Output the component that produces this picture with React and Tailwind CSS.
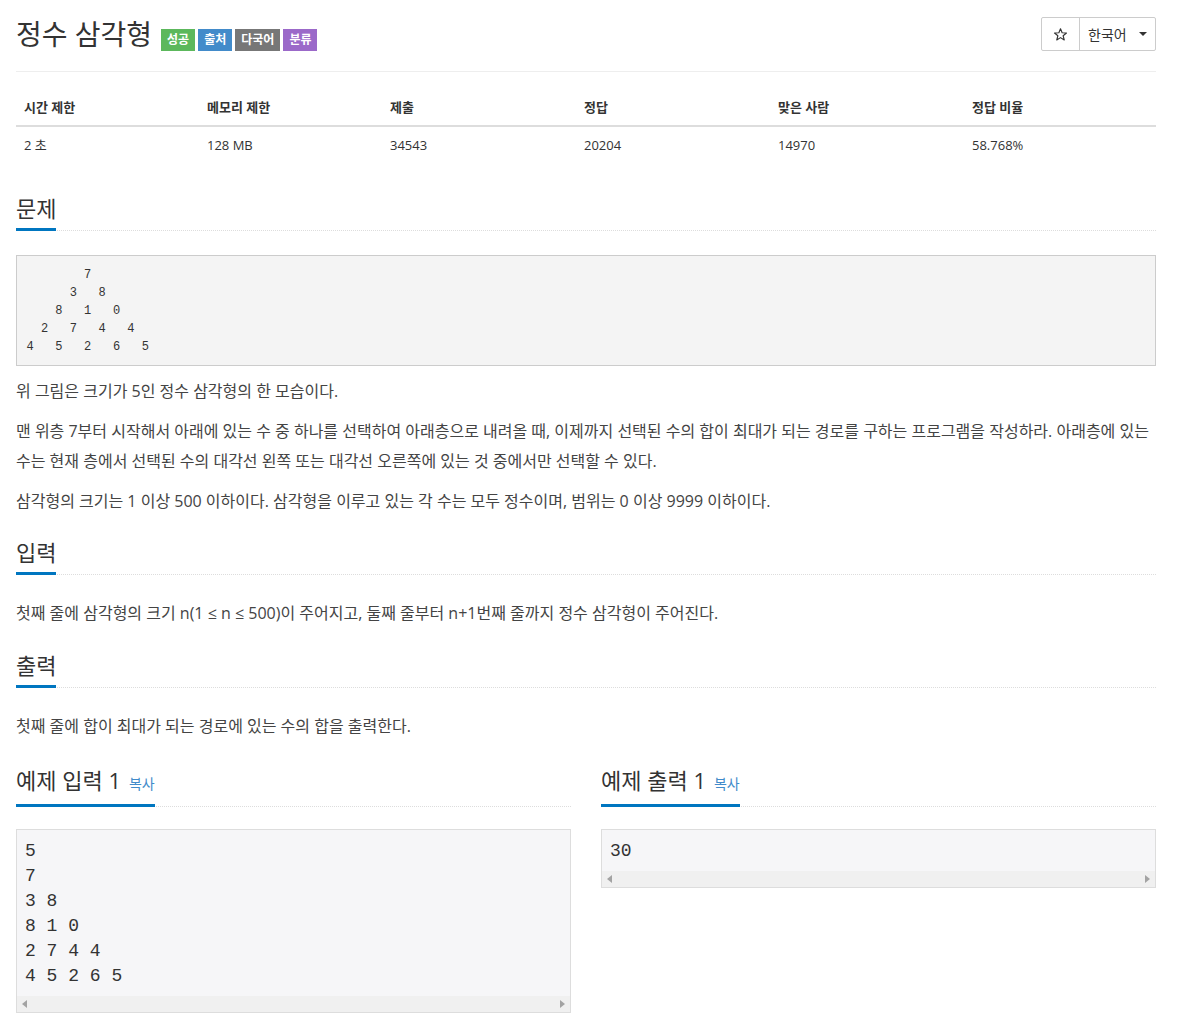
import { useState } from 'react'

// ── Badges ─────────────────────────────────────────────
const BADGES = [
  { label: '성공', cls: 'bg-[#5cb85c]' },
  { label: '출처', cls: 'bg-[#428bca]' },
  { label: '다국어', cls: 'bg-[#777777]' },
  { label: '분류', cls: 'bg-[#9b69c9]' },
]

const STATS = [
  ['시간 제한', '2 초'],
  ['메모리 제한', '128 MB'],
  ['제출', '34543'],
  ['정답', '20204'],
  ['맞은 사람', '14970'],
  ['정답 비율', '58.768%'],
]

const TRIANGLE = [
  '        7',
  '      3   8',
  '    8   1   0',
  '  2   7   4   4',
  '4   5   2   6   5',
].join('\n')

function StarIcon() {
  return (
    <svg width="15" height="15" viewBox="0 0 24 24" className="block">
      <path
        d="M12 2.8 L14.6 9.3 L21.6 9.6 L16.2 14 L18 20.8 L12 17 L6 20.8 L7.8 14 L2.4 9.6 L9.4 9.3 Z"
        fill="none"
        stroke="#333"
        strokeWidth="1.8"
        strokeLinejoin="round"
      />
    </svg>
  )
}

function Headline({ children, className = '' }) {
  return (
    <div className={`flex border-b border-dotted border-[#dddddd] ${className}`}>
      <h2 className="text-[22px] leading-[32px] pb-1 -mb-px border-b-[3px] border-[#0076c0] text-[#333]">
        {children}
      </h2>
    </div>
  )
}

function ScrollBar() {
  return (
    <div className="h-[16px] bg-[#f0f0f0] flex items-center justify-between px-[5px]">
      <svg width="5" height="8" viewBox="0 0 5 8"><path d="M5 0 L0 4 L5 8 Z" fill="#a3a3a3" /></svg>
      <svg width="5" height="8" viewBox="0 0 5 8"><path d="M0 0 L5 4 L0 8 Z" fill="#a3a3a3" /></svg>
    </div>
  )
}

function Sample({ title, data }) {
  return (
    <div className="flex-1 min-w-0">
      <div className="mt-[13px] flex border-b border-dotted border-[#dddddd]">
        <h2 className="flex items-baseline gap-[8px] leading-[32px] pb-1 -mb-px border-b-[3px] border-[#0076c0]">
          <span className="text-[22px] text-[#333]">{title}</span>
          <a href="#" className="text-[14px] text-[#428bca]">복사</a>
        </h2>
      </div>
      <div className="mt-[22px] border border-[#dddddd] bg-[#f6f6f8]">
        <pre className="px-[8px] pt-[9px] pb-[7px] text-[18px] leading-[25px] text-[#333] font-['Liberation_Mono',monospace]">
          {data}
        </pre>
        <ScrollBar />
      </div>
    </div>
  )
}

export default function App() {
  const [lang] = useState('한국어')

  return (
    <div className="min-h-screen bg-white font-['Open_Sans','Noto_Sans_CJK_KR',sans-serif] text-[#333]">
      <div className="ml-4 w-[1140px] pb-4 flex flex-col">
        {/* Header */}
        <div className="flex items-start justify-between pt-[17px] pb-[20px] border-b border-[#eeeeee]">
          <div className="flex items-start gap-[9px]">
            <h1 className="text-[28px] leading-[34px] text-[#333]">정수 삼각형</h1>
            <div className="flex gap-[3px] mt-[12px]">
              {BADGES.map(b => (
                <span
                  key={b.label}
                  className={`${b.cls} h-[22px] px-[6px] flex items-center text-[12px] font-bold text-white`}
                >
                  {b.label}
                </span>
              ))}
            </div>
          </div>
          <div className="flex h-[34px] border border-[#cccccc] rounded-[2px]">
            <button type="button" className="w-[38px] flex items-center justify-center border-r border-[#cccccc]">
              <StarIcon />
            </button>
            <button type="button" className="w-[75px] flex items-center pl-[8px] gap-[12px] text-[14px]">
              {lang}
              <span className="w-0 h-0 border-l-[4px] border-r-[4px] border-t-[4px] border-l-transparent border-r-transparent border-t-[#333]" />
            </button>
          </div>
        </div>

        {/* Stats table */}
        <div className="mt-[17px] mb-[20px]">
          <div className="grid grid-cols-[183px_183px_194px_194px_194px_192px] border-b-2 border-[#dddddd]">
            {STATS.map(([h]) => (
              <div key={h} className="px-2 py-2 leading-[20px] text-[13px] font-bold">{h}</div>
            ))}
          </div>
          <div className="grid grid-cols-[183px_183px_194px_194px_194px_192px]">
            {STATS.map(([h, v]) => (
              <div key={h} className="px-2 py-2 leading-[20px] text-[13px]">{v}</div>
            ))}
          </div>
        </div>

        {/* 문제 */}
        <Headline className="mt-[9px]">문제</Headline>
        <pre className="mt-6 mb-[10px] border border-[#cccccc] bg-[#f4f4f4] p-[9.5px] text-[12px] leading-[18px] text-[#333] font-['Liberation_Mono',monospace]">
          {TRIANGLE}
        </pre>
        <div className="text-[16px] leading-[30px] text-[#444]">
          <p className="mb-[10px]">위 그림은 크기가 5인 정수 삼각형의 한 모습이다.</p>
          <p className="mb-[10px]">
            맨 위층 7부터 시작해서 아래에 있는 수 중 하나를 선택하여 아래층으로 내려올 때, 이제까지 선택된 수의 합이 최대가 되는 경로를 구하는 프로그램을 작성하라. 아래층에 있는 수는 현재 층에서 선택된 수의 대각선 왼쪽 또는 대각선 오른쪽에 있는 것 중에서만 선택할 수 있다.
          </p>
          <p className="mb-[10px]">삼각형의 크기는 1 이상 500 이하이다. 삼각형을 이루고 있는 각 수는 모두 정수이며, 범위는 0 이상 9999 이하이다.</p>
        </div>

        {/* 입력 */}
        <Headline className="mt-[10px]">입력</Headline>
        <p className="mt-[23px] mb-[10px] text-[16px] leading-[30px] text-[#444]">
          첫째 줄에 삼각형의 크기 n(1 ≤ n ≤ 500)이 주어지고, 둘째 줄부터 n+1번째 줄까지 정수 삼각형이 주어진다.
        </p>

        {/* 출력 */}
        <Headline className="mt-[11px]">출력</Headline>
        <p className="mt-[23px] mb-[10px] text-[16px] leading-[30px] text-[#444]">
          첫째 줄에 합이 최대가 되는 경로에 있는 수의 합을 출력한다.
        </p>

        {/* 예제 */}
        <div className="flex items-start gap-[30px]">
          <Sample title="예제 입력 1" data={'5\n7\n3 8\n8 1 0\n2 7 4 4\n4 5 2 6 5'} />
          <Sample title="예제 출력 1" data="30" />
        </div>
      </div>
    </div>
  )
}
